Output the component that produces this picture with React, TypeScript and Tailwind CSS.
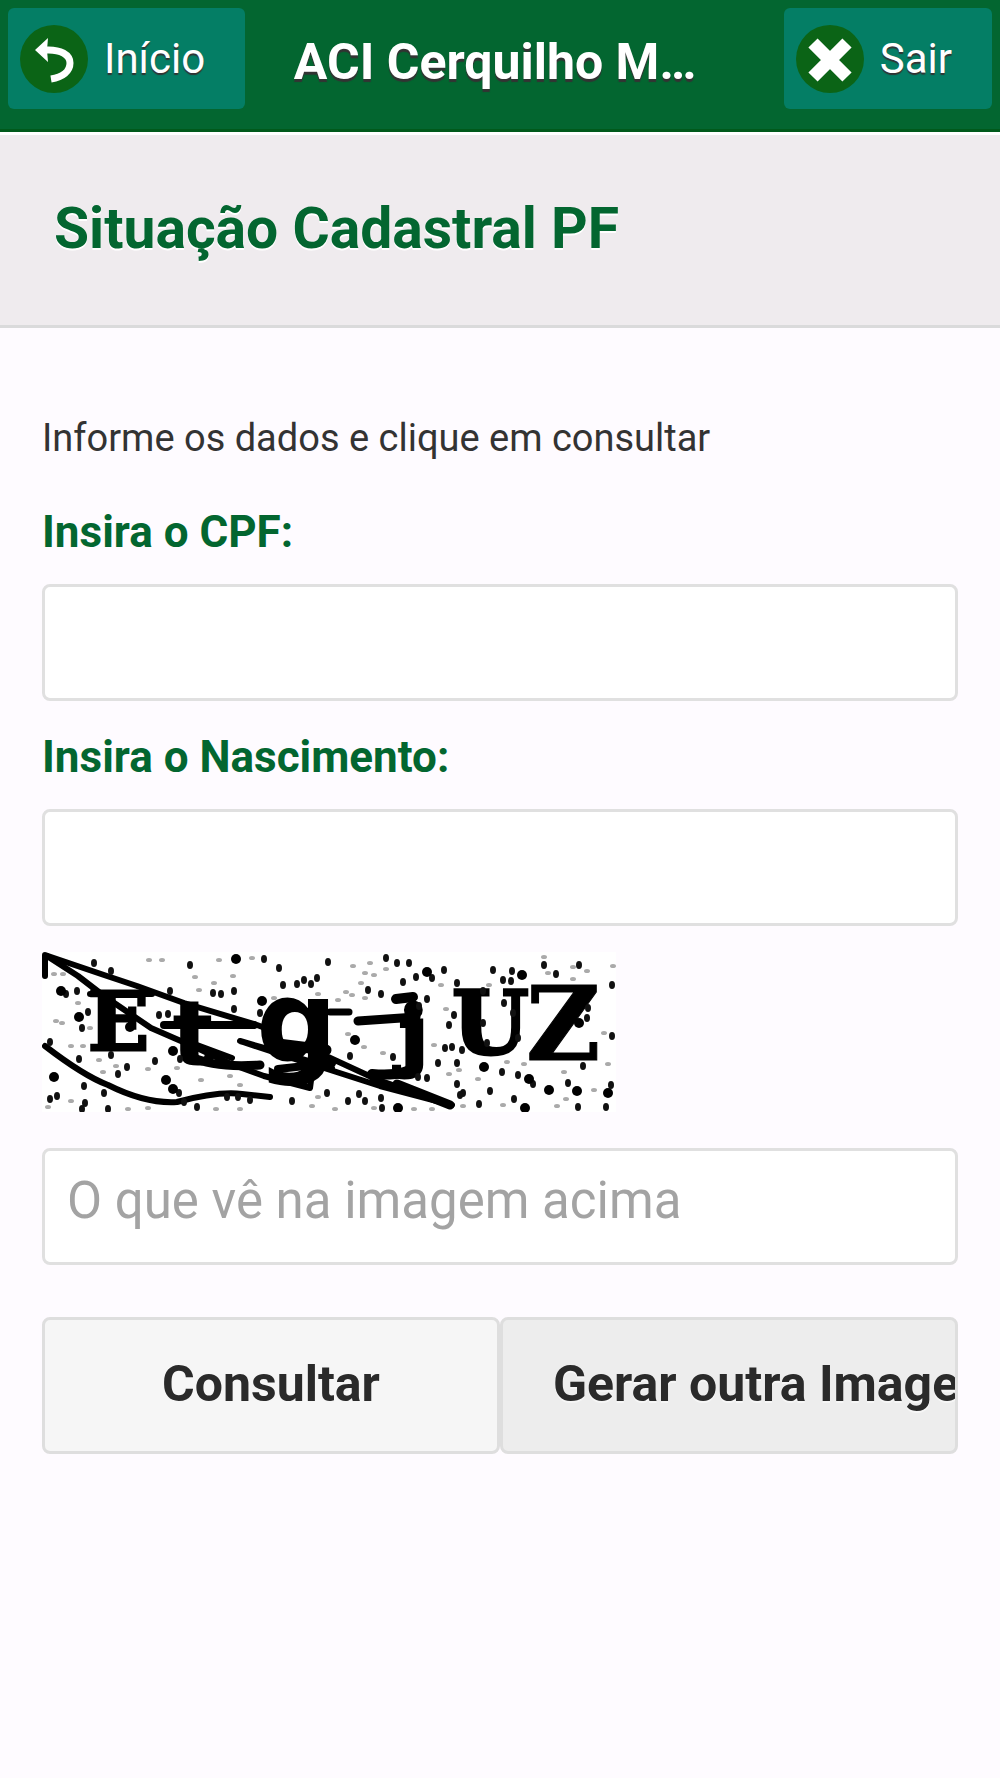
import { useState } from 'react';
import type { FormEvent } from 'react';

// captcha noise, [x, y] pairs grouped by size
const bigDots = [
  [194, 7], [220, 49], [274, 52], [19, 39], [37, 65], [12, 125], [131, 99], [124, 128], [131, 137], [385, 20],
  [480, 23], [537, 71], [313, 88], [442, 115], [487, 127], [507, 138], [535, 139], [566, 141], [483, 156], [88, 65],
  [88, 75], [356, 156],
];
const dots = [
  [52, 11], [69, 19], [148, 13], [222, 7], [237, 16], [286, 10], [171, 41], [179, 42], [192, 39], [192, 57],
  [218, 61], [241, 33], [255, 32], [262, 28], [269, 32], [275, 26], [24, 42], [35, 39], [46, 60], [40, 76],
  [8, 90], [37, 107], [42, 134], [15, 144], [8, 147], [43, 151], [40, 157], [66, 157], [62, 141], [85, 115],
  [76, 122], [113, 109], [138, 107], [137, 141], [155, 155], [142, 150], [185, 145], [196, 145], [208, 148], [250, 149],
  [285, 141], [117, 63], [126, 62], [128, 39], [344, 6], [355, 11], [367, 11], [361, 30],
  [374, 25], [390, 26], [402, 18], [326, 38], [339, 42], [385, 47], [377, 54], [415, 31], [451, 18],
  [470, 19], [461, 28], [469, 29], [502, 13], [514, 22], [537, 13], [570, 33], [412, 63], [407, 73], [441, 71],
  [462, 51], [471, 61], [476, 86], [445, 91], [545, 66], [546, 56], [570, 84], [351, 105], [308, 104], [403, 96],
  [410, 95], [420, 98], [396, 111], [415, 111], [460, 120], [476, 123], [491, 132], [526, 131], [541, 114], [569, 133],
  [564, 155], [536, 155], [472, 147], [437, 152], [448, 139], [421, 141], [415, 132], [418, 143], [385, 126], [376, 125],
  [306, 149], [317, 142], [323, 149], [339, 146], [340, 156], [69, 103], [441, 39],
];
const faintDots = [
  [107, 8], [120, 8], [177, 8], [210, 6], [153, 25], [191, 24], [172, 31], [157, 38], [232, 46], [276, 42],
  [12, 22], [21, 22], [36, 51], [14, 69], [20, 71], [48, 76], [29, 94], [41, 94], [57, 108], [29, 149],
  [6, 155], [86, 157], [74, 114], [61, 120], [106, 117], [135, 116], [159, 128], [188, 124], [198, 133], [276, 145],
  [270, 154], [198, 157], [174, 157], [106, 156], [311, 14], [328, 11], [344, 17], [323, 21], [332, 23], [319, 31],
  [304, 40], [310, 43], [323, 46], [296, 48], [399, 33], [447, 33], [502, 5], [506, 21], [531, 15], [545, 19],
  [531, 27], [571, 14], [404, 57], [562, 81], [306, 82], [322, 95], [341, 101], [392, 93], [417, 118], [407, 122],
  [436, 127], [482, 112], [465, 110], [522, 120], [566, 112], [552, 138], [524, 147], [515, 154], [461, 153], [421, 154],
  [293, 157], [332, 156], [372, 157], [390, 157],
];

const Captcha = () => (
  <svg viewBox="0 0 574 160" className="block w-[574px] max-w-full bg-white" role="img" aria-label="Imagem de verificação">
    <g fill="#000" stroke="#000" strokeWidth="3" fontFamily='"DejaVu Serif", serif' fontWeight="700">
      <text x="46" y="98" fontSize="80">E</text>
      <text x="131" y="111" fontSize="88" strokeWidth="3">t</text>
      <text x="214" y="109" fontSize="114" strokeWidth="0" fontFamily='"DejaVu Sans", sans-serif'>g</text>
      <text x="358" y="108" fontSize="74" strokeWidth="5">j</text>
      <text x="410" y="102" fontSize="88">U</text>
      <text x="484" y="108" fontSize="102" strokeWidth="1">Z</text>
    </g>
    <g fill="none" stroke="#000" strokeWidth="6" strokeLinecap="round" strokeLinejoin="round">
      <path d="M3 24V3L62 23L95 34L142 51L215 73L226 77" />
      <path d="M5 4L36 24L62 44L109 76L155 96L189 112L222 124L268 136L271 113L198 89L240 101L290 116" />
      <path d="M48 42H110" />
      <path d="M155 93L190 106" />
      <path d="M122 73H212" strokeWidth="8" />
      <path d="M150 105Q172 116 218 113" strokeWidth="9" />
      <path d="M3 94Q42 124 66 133Q104 152 135 150Q176 139 200 142L228 145" />
      <path d="M236 117L290 111" strokeWidth="8" />
      <path d="M228 91L284 98" strokeWidth="11" />
      <path d="M284 104L336 128L410 153L338 134L279 115" />
      <path d="M355 132L408 153" strokeWidth="9" />
      <path d="M288 60H307" strokeWidth="7" />
      <path d="M316 69L374 65" strokeWidth="9" />
      <path d="M354 47L371 45" strokeWidth="10" />
      <path d="M330 122Q364 125 376 112" strokeWidth="10" />
    </g>
    {faintDots.map(([x, y]) => <ellipse key={`f${x}-${y}`} cx={x} cy={y} rx="3" ry="2" fill="#aaa" />)}
    {dots.map(([x, y]) => <ellipse key={`d${x}-${y}`} cx={x} cy={y} rx="3" ry="4" fill="#111" />)}
    {bigDots.map(([x, y]) => <circle key={`b${x}-${y}`} cx={x} cy={y} r="5" />)}
  </svg>
);

const BackIcon = () => (
  <svg viewBox="0 0 68 68" className="size-[68px] shrink-0" aria-hidden="true">
    <circle cx="34" cy="34" r="34" fill="#0b6416" />
    <path d="M15 25L28 13L27 25L28 37Z" fill="#fff" />
    <path d="M25 25C41 24 50 30 50 38C50 46 43 52 31 54" fill="none" stroke="#fff" strokeWidth="7" />
  </svg>
);

const CloseIcon = () => (
  <svg viewBox="0 0 68 68" className="size-[68px] shrink-0" aria-hidden="true">
    <circle cx="34" cy="34" r="34" fill="#0b6416" />
    <path d="M17 18L51 52M51 18L17 52" stroke="#fff" strokeWidth="13" />
  </svg>
);

const headerButton =
  'flex h-[101px] items-center gap-4 rounded-md bg-[#047e65] pl-3 pr-10 text-[42px] leading-[48px] text-white text-shadow-[0_2px_1px_#333]';
const field =
  'block h-[117px] w-full rounded-lg border-3 border-[#e0e0e0] bg-white px-[22px] pb-3 text-[51px] text-[#333] outline-none placeholder:text-[#a3a3a3]';
const label = 'block text-[44px] leading-[56px] font-bold text-[#036630]';
const action =
  'h-[137px] min-w-0 overflow-hidden rounded-lg border-3 border-[#dedede] px-[50px] pb-1 text-[50px] leading-[60px] font-bold whitespace-nowrap text-[#2a2a2a] text-shadow-[0_2px_0_#f6f6f6]';

export default function App() {
  const [cpf, setCpf] = useState('');
  const [birth, setBirth] = useState('');
  const [code, setCode] = useState('');

  const onSubmit = (e: FormEvent) => e.preventDefault();

  return (
    <div className="min-h-screen bg-[#fefbff] font-['Roboto',sans-serif]">
      <header className="grid grid-cols-[29%_41%_1fr] border-b-3 border-[#00591b] bg-[#036630] px-2 pt-2 pb-5">
        <button type="button" className={`${headerButton} justify-self-start`}>
          <BackIcon /> Início
        </button>
        <h1 className="pt-6 text-center text-[50px] leading-[60px] font-bold whitespace-nowrap text-white text-shadow-[0_3px_1px_#333]">
          ACI Cerquilho M…
        </h1>
        <button type="button" className={`${headerButton} justify-self-end`}>
          <CloseIcon /> Sair
        </button>
      </header>

      <div className="border-t-3 border-b-3 border-t-white border-b-[#dadadb] bg-[#efebee] px-[54px] pt-[58px] pb-[60px]">
        <h2 className="text-[57px] leading-[72px] font-bold text-[#036630] text-shadow-[0_2px_0_#fff]">Situação Cadastral PF</h2>
      </div>

      <form onSubmit={onSubmit} className="px-[42px] pt-[84px]">
        <p className="text-[38px] leading-[52px] text-[#333]">Informe os dados e clique em consultar</p>

        <label htmlFor="cpf" className={`${label} mt-10`}>Insira o CPF:</label>
        <input id="cpf" className={`${field} mt-6`} value={cpf} onChange={(e) => setCpf(e.target.value)} />

        <label htmlFor="birth" className={`${label} mt-7`}>Insira o Nascimento:</label>
        <input id="birth" className={`${field} mt-6`} value={birth} onChange={(e) => setBirth(e.target.value)} />

        <div className="mt-[26px] mb-9">
          <Captcha />
        </div>

        <input
          aria-label="O que vê na imagem acima"
          placeholder="O que vê na imagem acima"
          className={field}
          value={code}
          onChange={(e) => setCode(e.target.value)}
        />

        <div className="mt-[52px] grid grid-cols-2">
          <button type="submit" className={`${action} bg-[#f6f6f6]`}>Consultar</button>
          <button type="button" className={`${action} bg-[#ededed] text-left`}>Gerar outra Imagem</button>
        </div>
      </form>
    </div>
  );
}
